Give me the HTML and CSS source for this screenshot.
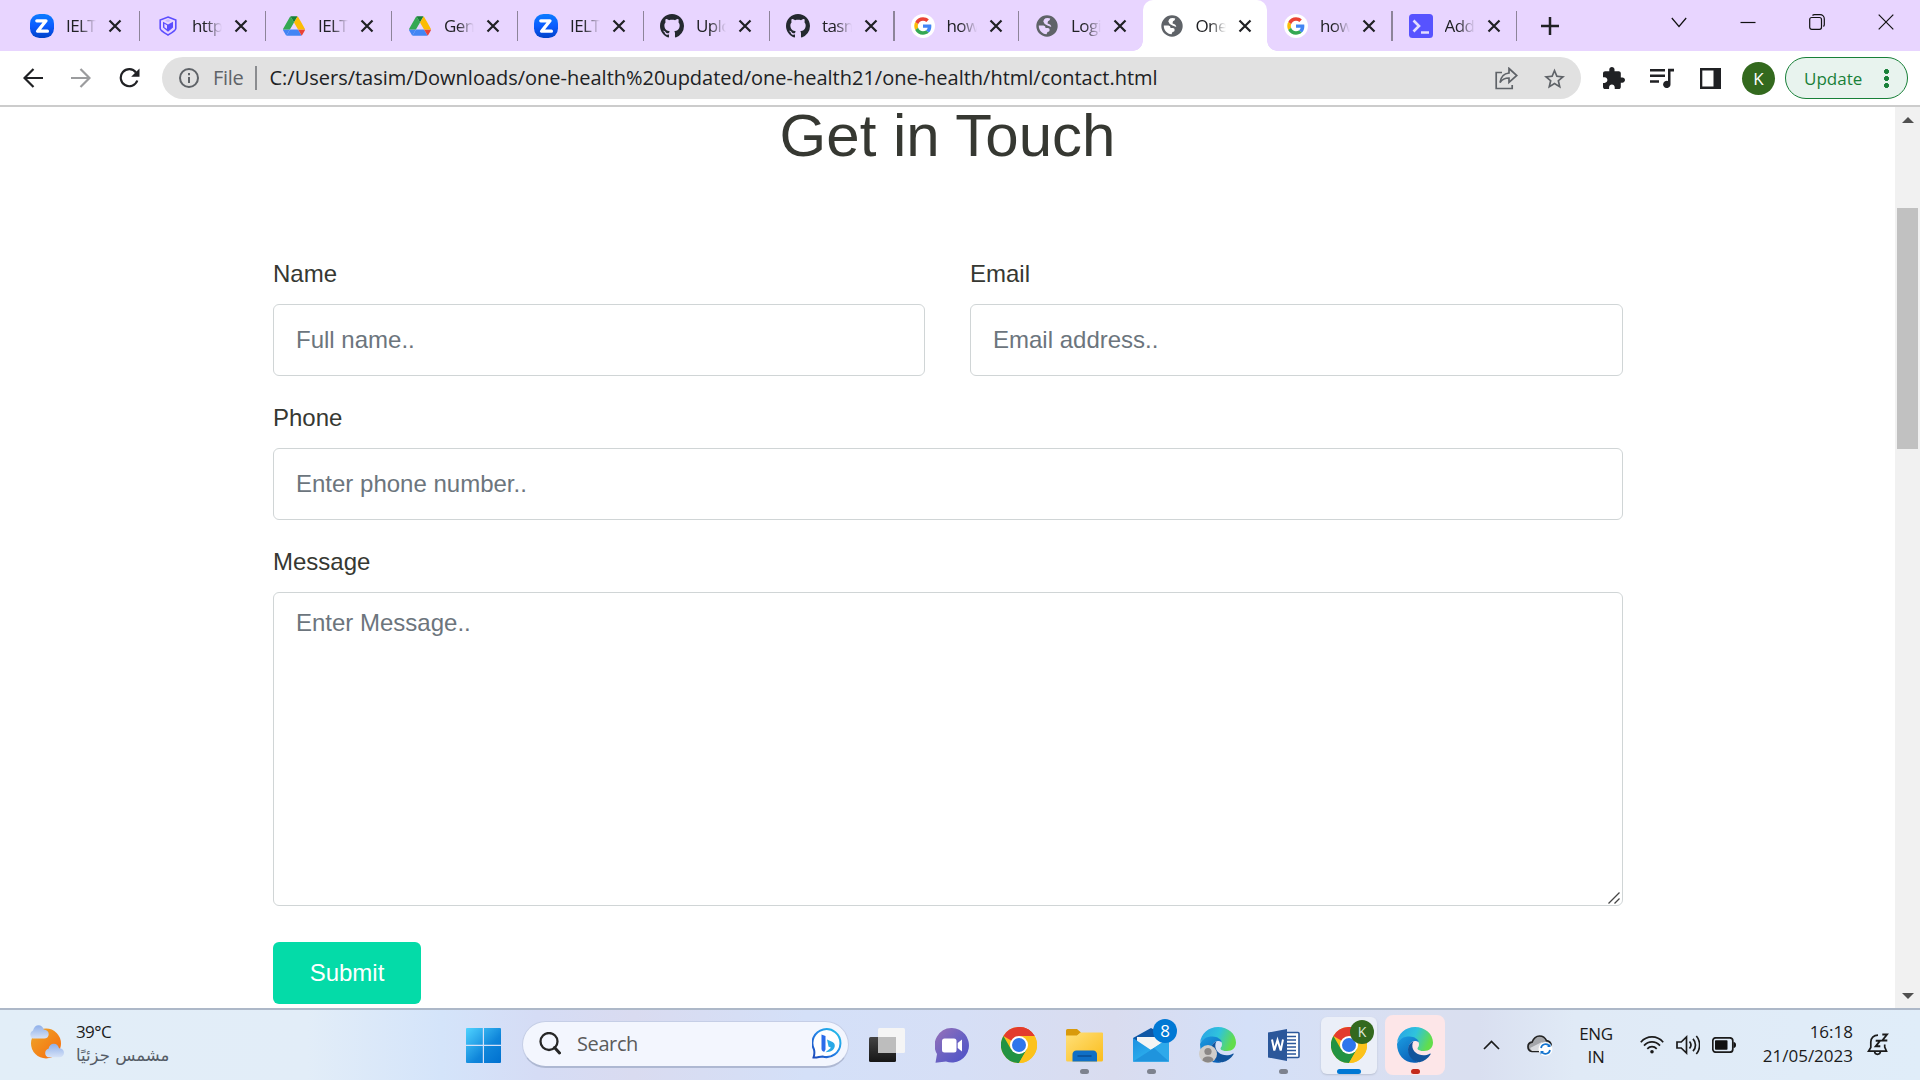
FILE: index.html
```html
<!DOCTYPE html>
<html lang="en">
<head>
<meta charset="utf-8">
<title>One Health</title>
<link rel="stylesheet" href="styles.css">
</head>
<body>
<svg class="defs" width="0" height="0" aria-hidden="true">
  <defs>
    <linearGradient id="zg" x1="0" y1="0" x2="0" y2="1"><stop offset="0" stop-color="#0b7cff"/><stop offset=".5" stop-color="#0b5cff"/><stop offset="1" stop-color="#0042c8"/></linearGradient>
    <linearGradient id="sun" x1="0" y1="0" x2="1" y2="1"><stop offset="0" stop-color="#eda82b"/><stop offset="1" stop-color="#f8690b"/></linearGradient>
    <linearGradient id="cloud" x1="0" y1="0" x2="0" y2="1"><stop offset="0" stop-color="#8fb0ea"/><stop offset="1" stop-color="#d6e2f7"/></linearGradient>
    <linearGradient id="win" x1="0" y1="0" x2="1" y2="1"><stop offset="0" stop-color="#4fd3ff"/><stop offset=".6" stop-color="#0f85da"/><stop offset="1" stop-color="#0070cf"/></linearGradient>
    <linearGradient id="bing" x1="0" y1="1" x2="1" y2="0"><stop offset="0" stop-color="#1b46b8"/><stop offset=".5" stop-color="#2383e8"/><stop offset="1" stop-color="#25c8e8"/></linearGradient>
    <linearGradient id="chat" x1="0" y1="0" x2="1" y2="1"><stop offset="0" stop-color="#9a72b8"/><stop offset=".5" stop-color="#6b62c2"/><stop offset="1" stop-color="#4c50c8"/></linearGradient>
    <linearGradient id="fold" x1="0" y1="0" x2="1" y2="1"><stop offset="0" stop-color="#ffe07a"/><stop offset="1" stop-color="#fbbd1c"/></linearGradient>
    <linearGradient id="mail" x1="0" y1="0" x2="1" y2="1"><stop offset="0" stop-color="#1d8fe0"/><stop offset="1" stop-color="#35c3f5"/></linearGradient>
    <linearGradient id="e1" x1="0" y1="0" x2="1" y2=".3"><stop offset="0" stop-color="#2a9fe6"/><stop offset=".55" stop-color="#2fc3dd"/><stop offset="1" stop-color="#62dd4c"/></linearGradient>
    <linearGradient id="e2" x1="0" y1="0" x2=".6" y2="1"><stop offset="0" stop-color="#1b9de2"/><stop offset="1" stop-color="#0c62b8"/></linearGradient>
    <linearGradient id="blk" x1="0" y1="0" x2="0" y2="1"><stop offset="0" stop-color="#444"/><stop offset="1" stop-color="#161616"/></linearGradient>

    <symbol id="i-zoom" viewBox="0 0 24 24"><rect width="24" height="24" rx="9.5" fill="url(#zg)"/><path d="M6.8 6.8h9.2L7.6 17.2h9.8" fill="none" stroke="#fff" stroke-width="3.3" stroke-linecap="round" stroke-linejoin="round"/></symbol>
    <symbol id="i-shield" viewBox="0 0 24 24"><path d="M12 3l7.800 3v8.400c0 2-4.500 4.600-7.800 6.600-3.300-2-7.800-4.600-7.800-6.600V6z" fill="none" stroke="#5b4dff" stroke-width="1.600"/><path d="M12 10.500l5-2.700v5.700l-5 4.300-5-4.300V7.800z" fill="#5b4dff"/><path d="M8.400 9.800l2.600 1.500v3.800l-2.600-1.800z" fill="#e8d5ff"/><path d="M12 5.200l3 1.500-3 1.600-3-1.600z" fill="#c9b8ff"/></symbol>
    <symbol id="i-drive" viewBox="0 0 87.300 78"><path d="M6.600 66.850l3.850 6.650c.8 1.400 1.950 2.500 3.300 3.300L27.500 53H0c0 1.550.4 3.100 1.200 4.500z" fill="#4285f4"/><path d="M43.650 25L29.900 1.200c-1.350.8-2.500 1.900-3.300 3.300L1.200 48.500C.4 49.900 0 51.450 0 53h27.500z" fill="#34a853"/><path d="M43.650 25L57.400 1.200C56.050.4 54.500 0 52.900 0H34.400c-1.600 0-3.150.45-4.500 1.200z" fill="#188038"/><path d="M59.800 53H27.500L13.750 76.800c1.350.8 2.900 1.200 4.500 1.200h50.800c1.600 0 3.150-.45 4.500-1.200z" fill="#4285f4"/><path d="M73.550 76.800c1.350-.8 2.500-1.900 3.300-3.300l9.250-16c.8-1.400 1.200-2.950 1.200-4.500H59.800z" fill="#ea4335"/><path d="M73.400 26.500L60.700 4.500c-.8-1.400-1.950-2.500-3.300-3.300L43.650 25 59.800 53h27.450c0-1.550-.4-3.100-1.200-4.500z" fill="#fbbc04"/></symbol>
    <symbol id="i-github" viewBox="0 0 16 16"><path fill="#24292f" d="M8 0C3.580 0 0 3.580 0 8c0 3.540 2.290 6.530 5.470 7.590.4.070.55-.17.55-.38 0-.19-.01-.82-.01-1.490-2.010.37-2.530-.49-2.690-.94-.09-.23-.48-.94-.82-1.130-.28-.15-.68-.52-.01-.53.63-.01 1.080.58 1.230.82.72 1.210 1.870.87 2.330.66.070-.52.28-.87.51-1.070-1.780-.2-3.640-.89-3.640-3.950 0-.87.31-1.590.82-2.150-.08-.2-.36-1.020.08-2.120 0 0 .67-.21 2.200.82.64-.18 1.320-.27 2-.27s1.360.09 2 .27c1.530-1.040 2.200-.82 2.200-.82.44 1.100.16 1.920.08 2.120.51.56.82 1.270.82 2.150 0 3.070-1.870 3.750-3.650 3.950.29.25.54.73.54 1.480 0 1.070-.01 1.930-.01 2.200 0 .21.15.46.55.38A8.010 8.010 0 0 0 16 8c0-4.420-3.580-8-8-8z"/></symbol>
    <symbol id="i-google" viewBox="-9 -9 66 66"><circle cx="24" cy="24" r="33" fill="#fff"/><path fill="#EA4335" d="M24 9.500c3.540 0 6.710 1.220 9.210 3.600l6.850-6.850C35.900 2.380 30.470 0 24 0 14.620 0 6.510 5.380 2.560 13.220l7.980 6.190C12.430 13.720 17.740 9.500 24 9.500z"/><path fill="#4285F4" d="M46.980 24.550c0-1.570-.15-3.090-.38-4.550H24v9.020h12.940c-.58 2.960-2.260 5.480-4.780 7.180l7.730 6c4.510-4.180 7.090-10.360 7.090-17.650z"/><path fill="#FBBC05" d="M10.530 28.590c-.48-1.450-.76-2.990-.76-4.590s.27-3.140.76-4.590l-7.980-6.190C.92 16.460 0 20.120 0 24c0 3.880.92 7.540 2.560 10.780z"/><path fill="#34A853" d="M24 48c6.480 0 11.930-2.130 15.890-5.810l-7.730-6c-2.150 1.450-4.920 2.300-8.160 2.300-6.260 0-11.570-4.220-13.470-9.910l-7.980 6.190C6.510 42.620 14.620 48 24 48z"/></symbol>
    <symbol id="i-globe" viewBox="0 0 24 24"><path fill="#5f6368" fill-rule="evenodd" d="M12 1.300A10.700 10.700 0 1 0 12 22.700 10.700 10.700 0 0 0 12 1.300zM10.500 4.300Q13 3.700 15.300 4.400 15 6.700 13 7.200L12.500 9.300Q12.800 10 14 10 16 10.300 16.300 13L12.500 11.600Q8.800 10 8.300 7.500 8.700 5 10.500 4.300zM3.800 11.500H8.500Q10.500 11.800 10.600 14H12.800Q14.700 14.200 14.700 16 14.600 17.800 12.500 18L11.500 20.300C7 20 3.600 16 3.800 11.500z"/></symbol>
    <symbol id="i-term" viewBox="0 0 24 24"><rect width="24" height="24" rx="3.500" fill="#5753ff"/><path d="M4.500 6.500L10 12l-5.500 5.500M12 18.500h8" fill="none" stroke="#e4deff" stroke-width="2.600"/></symbol>
    <symbol id="i-x" viewBox="0 0 14 14"><path d="M1.500 1.500l11 11M12.500 1.500l-11 11" stroke="#202124" stroke-width="2.200" fill="none"/></symbol>
    <symbol id="i-chrome" viewBox="0 0 36 36"><circle cx="18" cy="18" r="18" fill="#fcc21b"/><path d="M18 18L2.400 9A18 18 0 0 1 33.600 9z" fill="#e33b2e"/><path d="M18 0a18 18 0 0 1 15.600 9H18z" fill="#e33b2e"/><path d="M2.400 9A18 18 0 0 0 18 36l7.800-13.500L18 18 10.200 22.500z" fill="#229342"/><path d="M18 9h15.600A18 18 0 0 1 18 36l7.800-13.500z" fill="#fcc21b"/><circle cx="18" cy="18" r="9" fill="#fff"/><circle cx="18" cy="18" r="7" fill="#2f76ec"/></symbol>
    <symbol id="i-edge" viewBox="0 0 36 36"><path d="M0 16C1 6.500 8.500 0 18 0c10 0 18 7 18 15.500 0 5-3.700 8.500-9 8.500-4 0-6.500-1.300-6.500-2.600 0-.9 1.500-1.600 1.500-4.200 0-3.700-3.500-6.700-9-6.700C7 10.500 2 12 0 16z" fill="url(#e1)"/><path d="M0 17c1.500-5 6.500-7.500 12.500-7.500 5 0 9 3 9.500 6-1-1-2.500-1.500-4-1.500-4 0-6.500 4-6.500 8 0 6 4 11 10 13.200C9 38 0 29 0 17z" fill="url(#e2)"/><path d="M16.500 14.200C12.700 16 11 19 11 22.500c0 7 5.500 12.800 11.500 12.800 4.500-1 8.500-4 11-7.800.4-.7-.1-1.200-.8-.8-2 1-4 1.500-6.200 1.500-6 0-11.200-4-11.200-9.500 0-1.800.4-3.300 1.200-4.500z" fill="#11549c"/></symbol>
  </defs>
</svg>

<header class="tabstrip">
  <div class="tab"><svg class="fav"><use href="#i-zoom"/></svg><span class="title">IELTS</span><svg class="x"><use href="#i-x"/></svg></div>
  <div class="tab"><svg class="fav"><use href="#i-shield"/></svg><span class="title">https</span><svg class="x"><use href="#i-x"/></svg></div>
  <div class="tab"><svg class="fav drive"><use href="#i-drive"/></svg><span class="title">IELTS</span><svg class="x"><use href="#i-x"/></svg></div>
  <div class="tab"><svg class="fav drive"><use href="#i-drive"/></svg><span class="title">Gene</span><svg class="x"><use href="#i-x"/></svg></div>
  <div class="tab"><svg class="fav"><use href="#i-zoom"/></svg><span class="title">IELTS</span><svg class="x"><use href="#i-x"/></svg></div>
  <div class="tab"><svg class="fav"><use href="#i-github"/></svg><span class="title">Uploa</span><svg class="x"><use href="#i-x"/></svg></div>
  <div class="tab narrow"><svg class="fav"><use href="#i-github"/></svg><span class="title">tasm</span><svg class="x"><use href="#i-x"/></svg></div>
  <div class="tab narrow"><svg class="fav"><use href="#i-google"/></svg><span class="title">how t</span><svg class="x"><use href="#i-x"/></svg></div>
  <div class="tab narrow nosep"><svg class="fav"><use href="#i-globe"/></svg><span class="title">Logi</span><svg class="x"><use href="#i-x"/></svg></div>
  <div class="tab narrow active nosep"><svg class="fav"><use href="#i-globe"/></svg><span class="title">One H</span><svg class="x"><use href="#i-x"/></svg></div>
  <div class="tab narrow"><svg class="fav"><use href="#i-google"/></svg><span class="title">how t</span><svg class="x"><use href="#i-x"/></svg></div>
  <div class="tab narrow"><svg class="fav"><use href="#i-term"/></svg><span class="title">Add f</span><svg class="x"><use href="#i-x"/></svg></div>
  <svg class="plus" viewBox="0 0 18 18"><path d="M9 0v18M0 9h18" stroke="#202124" stroke-width="2.500"/></svg>
  <div class="winctl">
    <svg width="16" height="16" viewBox="0 0 16 16"><path d="M.8 4L8 12.500 15.200 4"/></svg>
    <svg width="16" height="16" viewBox="0 0 16 16"><path d="M.5 8.500h15"/></svg>
    <svg width="16" height="16" viewBox="0 0 16 16"><rect x=".7" y="3.500" width="11.800" height="11.800" rx="2"/><path d="M3.500 1.500C4 .9 4.500.7 5.500.7H11c2.600 0 4.300 1.700 4.300 4.300v5.500c0 1-.3 1.500-.9 2"/></svg>
    <svg width="16" height="16" viewBox="0 0 16 16"><path d="M.7.7l14.600 14.600M15.300.7L.7 15.300"/></svg>
  </div>
</header>

<nav class="toolbar">
  <svg class="nav-i back" viewBox="0 0 20 20"><path d="M20 10H2M10.500 1L1.500 10l9 9" stroke="#202124"/></svg>
  <svg class="nav-i fwd" viewBox="0 0 20 20"><path d="M0 10h18M9.500 1l9 9-9 9" stroke="#9b9c9e"/></svg>
  <svg class="nav-i reload" viewBox="0 0 20 20"><path d="M17.800 12.500A8.500 8.500 0 1 1 16.500 4.500" stroke="#202124"/><path d="M20 .5v8.300h-8.300z" fill="#202124" stroke="none"/></svg>
  <div class="omnibox">
    <svg class="info" viewBox="0 0 20 20"><circle cx="10" cy="10" r="9" fill="none" stroke="#5f6368" stroke-width="2"/><path d="M9 9h2v6H9zM9 5h2v2.200H9z" fill="#5f6368"/></svg>
    <span class="scheme">File</span>
    <span class="bar"></span>
    <span class="url">C:/Users/tasim/Downloads/one-health%20updated/one-health21/one-health/html/contact.html</span>
    <svg class="share" viewBox="0 0 23 23"><path d="M7 5.500H1.200v16h16V18" /><path d="M14 1.500l7.800 7-7.800 6.800V11c-4 0-6.800 1.200-9 4.500C5.800 10 8.800 6.500 14 6z"/></svg>
    <svg class="star" viewBox="2 2 20 19"><path fill="#5f6368" d="M22 9.240l-7.190-.62L12 2 9.190 8.630 2 9.240l5.460 4.730L5.820 21 12 17.270 18.180 21l-1.630-7.030L22 9.240zM12 15.400l-3.760 2.270 1-4.280-3.320-2.880 4.380-.38L12 6.100l1.710 4.040 4.380.38-3.320 2.880 1 4.280L12 15.400z"/></svg>
  </div>
  <svg class="puzzle" viewBox="2 1 21 21"><path fill="#202124" d="M20.500 11H19V7c0-1.100-.9-2-2-2h-4V3.500C13 2.120 11.880 1 10.500 1S8 2.120 8 3.500V5H4c-1.100 0-1.990.9-1.990 2v3.800H3.500c1.490 0 2.700 1.210 2.700 2.700s-1.210 2.700-2.700 2.700H2V20c0 1.100.9 2 2 2h3.800v-1.500c0-1.490 1.210-2.700 2.700-2.700 1.490 0 2.700 1.210 2.700 2.700V22H17c1.100 0 2-.9 2-2v-4h1.500c1.380 0 2.500-1.120 2.500-2.500S21.880 11 20.500 11z"/></svg>
  <svg class="queue" viewBox="0 0 24 20"><path d="M0 2.300h15M0 7.800h15M0 13.500h9" stroke="#202124" stroke-width="2.400"/><path d="M24 .8h-6v12.100a3.700 3.700 0 1 0 2.500 3.400V3.500H24z" fill="#202124"/></svg>
  <svg class="panel" viewBox="0 0 21 21"><path fill="#202124" fill-rule="evenodd" d="M0 0h21v21H0zM2.300 2.500v16H13.500v-16z"/></svg>
  <span class="avatar">K</span>
  <span class="update"><span>Update</span><i></i></span>
</nav>

<main class="viewport">
  <section class="page">
    <h1>Get in Touch</h1>
    <form class="form">
      <div class="field"><label for="n">Name</label><input id="n" type="text" placeholder="Full name.."></div>
      <div class="field"><label for="e">Email</label><input id="e" type="text" placeholder="Email address.."></div>
      <div class="field wide"><label for="p">Phone</label><input id="p" type="text" placeholder="Enter phone number.."></div>
      <div class="field wide"><label for="m">Message</label>
        <div class="area"><textarea id="m" placeholder="Enter Message.."></textarea><svg class="grip" viewBox="0 0 12 12"><path d="M.5 11.500l11-11M6.500 11.500l5-5" stroke="#444" stroke-width="1.300"/></svg></div>
      </div>
      <button class="submit" type="button">Submit</button>
    </form>
  </section>
  <aside class="scroll">
    <svg width="12" height="6" viewBox="0 0 12 6"><path d="M0 6l6-6 6 6z" fill="#505050"/></svg>
    <span class="thumb"></span>
    <svg class="down" width="12" height="6" viewBox="0 0 12 6"><path d="M0 0h12L6 6z" fill="#505050"/></svg>
  </aside>
</main>

<footer class="taskbar">
  <div class="weather">
    <svg width="36" height="34" viewBox="0 0 36 34"><circle cx="18" cy="18.500" r="15" fill="url(#sun)"/><path d="M4.500 13.500a4.500 4.500 0 0 1 .5-8C6 2 8 .3 10.500.3c2.700 0 4.500 1.700 5.200 4.200 3 .2 5 2 5 4.700s-2 4.300-4.500 4.300z" fill="url(#cloud)"/><path d="M20 32.300a4.500 4.500 0 0 1 .5-8.500c.8-3.200 2.700-5 5.300-5 2.800 0 4.600 1.800 5.200 4.500 3 0 5 1.900 5 4.500s-2 4.500-4.500 4.500z" fill="url(#cloud)"/></svg>
    <div class="wtext"><span>39°C</span><span class="ar" dir="rtl">مشمس جزئيًا</span></div>
  </div>

  <div class="apps">
    <svg class="start" viewBox="0 0 35 35"><path fill="url(#win)" d="M1 0h15.800v16.800H0V1a1 1 0 0 1 1-1zM18 0h16a1 1 0 0 1 1 1v15.800H18zM0 18h16.800v17H1a1 1 0 0 1-1-1zM18 18h17v16a1 1 0 0 1-1 1H18z"/></svg>
    <div class="search">
      <svg width="22" height="23" viewBox="0 0 22 23"><circle cx="10" cy="9.500" r="8.500" fill="none" stroke="#262626" stroke-width="2.300"/><path d="M15.500 15.500l5 5.500" stroke="#262626" stroke-width="3" stroke-linecap="round"/></svg>
      <span>Search</span>
      <svg width="31" height="32" viewBox="0 0 31 32"><path d="M1.500 29.500C2.500 27 2.800 25 2 21.500A14 14 0 1 1 10.500 28.500c-3 0-5.500 1.500-9 1z" fill="#fff" stroke="url(#bing)" stroke-width="2"/><path d="M9.500 6.500l4 1.500v13.500l-1.200 2.200c-1.800-.2-2.800-1.200-2.800-3z" fill="#2a6bea"/><path d="M15 11.500l5.500 2.500c1.500.8 2.300 2 2.300 3.800 0 3.700-3.800 6.500-9.300 6.500l5.500-4.500-2.500-1.200z" fill="#2aa9e6"/></svg>
    </div>
    <svg class="tview" viewBox="0 0 36 35"><rect y="9" width="27" height="25" rx="1.500" fill="url(#blk)"/><rect x="9" y="0" width="27" height="25" rx="1.500" fill="#f5f5f5"/><path d="M9 9h18v16H9z" fill="#bdbdbd"/></svg>
    <svg class="chat" viewBox="0 0 34 35"><path d="M17 0a17 17.300 0 1 1-6 33.500L.500 34.800 2 26A17 17.300 0 0 1 17 0z" fill="url(#chat)"/><rect x="7" y="10.500" width="14.500" height="14" rx="2.500" fill="#fff"/><path d="M22.700 15l4.300-3.500V23.500L22.700 20z" fill="#fff"/></svg>
    <svg class="chrome"><use href="#i-chrome"/></svg>
    <div class="app"><svg width="37" height="33" viewBox="0 0 37 33"><path d="M1.500 0h9.500l4 3.500L11 7H0V1.500A1.500 1.500 0 0 1 1.500 0z" fill="#d99a0b"/><path d="M0 6.500h11l3.500-3H36a1 1 0 0 1 1 1V31a1.500 1.500 0 0 1-1.500 1.500h-34A1.500 1.500 0 0 1 0 31z" fill="url(#fold)"/><path d="M6.500 32.500V26a4 4 0 0 1 4-4.500h16.500a4 4 0 0 1 4 4.500v6.500z" fill="#0f6fc6"/><path d="M11.500 27h14" stroke="#0a4c92" stroke-width="1.500"/></svg><i class="dot"></i></div>
    <div class="app"><svg width="36" height="34" viewBox="0 0 36 34"><path d="M0 10L18 0l18 10v5H0z" fill="#0f57a5"/><path d="M4 9h28v12H4z" fill="#f4f4f4"/><path d="M0 10l18 12 18-12v23.500H0z" fill="url(#mail)"/><path d="M0 33.500L36 10v23.500z" fill="#2ea9ea"/><path d="M0 33.500L21 20l15 13.500z" fill="#1f94dd"/></svg><span class="badge">8</span><i class="dot"></i></div>
    <div class="app"><svg width="36" height="36"><use href="#i-edge"/></svg><svg class="person" viewBox="0 0 18 18"><circle cx="9" cy="9" r="9" fill="#cfcdca"/><circle cx="9" cy="6.500" r="3.600" fill="#8b8886"/><path d="M3.500 15.500c0-5.500 11-5.500 11 0a9 9 0 0 1-11 0z" fill="#8b8886"/></svg></div>
    <div class="app"><svg width="32" height="32" viewBox="0 0 32 32"><rect x="17" y="3.500" width="14" height="25" rx="1" fill="#fff" stroke="#2b579a" stroke-width="1.600"/><path d="M19 7.500h9M19 11h9M19 14.500h9M19 18h9M19 21.500h9M19 25h9" stroke="#2b579a" stroke-width="1.500"/><path d="M0 3.500L19 0v32L0 28.500z" fill="#2b579a"/><path d="M4 10.500l2.300 11L9.500 11l3.200 10.500 2.300-11" fill="none" stroke="#fff" stroke-width="2"/></svg><i class="dot"></i></div>
    <div class="app tile"><svg width="36" height="36"><use href="#i-chrome"/></svg><span class="badge user">K</span><i class="dot on"></i></div>
    <div class="app tile alert"><svg width="36" height="36"><use href="#i-edge"/></svg><i class="dot red"></i></div>
  </div>

  <div class="tray">
    <svg class="up" viewBox="0 0 17 10"><path d="M1 9l7.500-7.500L16 9"/></svg>
    <svg class="od" viewBox="0 0 26 22"><path d="M5 17.500a4.700 4.700 0 0 1 0-9.300C6.500 4.500 9 2 12.500 2c3.500 0 5.700 1.800 7 4.700 3 .6 4.700 2.500 4.700 5.300s-2 5.500-5 5.500z" fill="#a4a6aa" stroke="#222" stroke-width="1.700"/><path d="M3 14l12-6 5 9H5z" fill="#d8dade"/><circle cx="18.500" cy="15" r="7" fill="#fff"/><path d="M14 14a4.700 4.700 0 0 1 8.500-1.800M23 16a4.700 4.700 0 0 1-8.500 1.800" fill="none" stroke="#1474cf" stroke-width="1.700"/><path d="M23.500 9.500V13H20zM13.500 20.500V17H17z" fill="#1474cf"/></svg>
    <div class="lang"><span>ENG</span><span>IN</span></div>
    <svg class="wifi" viewBox="0 0 24 18"><path d="M.8 6.200C7-.8 17-.8 23.200 6.200M4 9.600c4.500-4.900 11.500-4.900 16 0M7.300 12.800c2.700-2.900 6.700-2.900 9.400 0" /><circle cx="12" cy="15.700" r="1.800" fill="#1b1b1b" stroke="none"/></svg>
    <svg class="vol" viewBox="0 0 24 20"><path d="M1 7h4.200l5.300-5v16l-5.300-5H1zM13.500 6.500c1.700 2 1.700 5 0 7M17 3.800c3.300 3.500 3.300 8.900 0 12.400M20.300 1c4.400 5 4.400 13 0 18"/></svg>
    <svg class="batt" viewBox="0 0 24 16"><rect x=".8" y=".8" width="20" height="14.400" rx="3"/><rect x="3" y="3.200" width="12.500" height="9.600" rx=".8" fill="#111" stroke="none"/><path d="M21.500 5c1.800.3 2.500 1.200 2.500 3s-.7 2.700-2.500 3z" fill="#111" stroke="none"/></svg>
    <div class="clock"><span>16:18</span><span>21/05/2023</span></div>
    <svg class="bell" viewBox="0 0 22 23"><path d="M11 2.200C6.500 2.200 3.800 5.200 3.800 9v5.500L1.500 18.200h18L17.700 14v-2.500M7.500 18.500c.5 3.800 5.500 3.800 6 0"/><path d="M8.700 7.800h4.300l-4.300 5.500h4.600M15.300 1.500h4.700l-4.700 6h5" stroke-width="1.900"/></svg>
  </div>
</footer>
</body>
</html>
```

FILE: styles.css
```css
* { box-sizing: border-box; }
html, body { height: 100%; }
body {
  margin: 0;
  width: 1920px;
  height: 1080px;
  overflow: hidden;
  display: flex;
  flex-direction: column;
  background: #fff;
  font-family: "Open Sans", "Noto Sans", sans-serif;
  color: #1b1b1b;
}
svg { display: block; flex: none; }
.defs { position: absolute; }

/* Tab strip */
.tabstrip {
  flex: none;
  height: 51px;
  background: #e8d5ff;
  display: flex;
  align-items: center;
  padding-left: 13px;
}
.tab {
  position: relative;
  flex: none;
  width: 126px;
  height: 51px;
  padding-left: 17px;
  display: flex;
  align-items: center;
}
.tab.narrow { width: 124.5px; }
.tab::after {
  content: "";
  position: absolute;
  right: -1px;
  top: 11px;
  width: 1.500px;
  height: 30px;
  background: #8d8499;
}
.tab.nosep::after { display: none; }
.fav { width: 24px; height: 24px; }
.drive { padding: 2px 1px; }
.title {
  width: 30px;
  margin-left: 12px;
  overflow: hidden;
  white-space: nowrap;
  font-size: 17px;
  line-height: 24px;
  letter-spacing: -.6px;
  color: #202124;
  -webkit-mask-image: linear-gradient(90deg, #000 45%, transparent);
  mask-image: linear-gradient(90deg, #000 45%, transparent);
}
.x { width: 14px; height: 14px; margin-left: 12px; }
.tab.active { background: #fff; border-radius: 10px 10px 0 0; }
.tab.active::before,
.tab.active.nosep::after {
  content: "";
  display: block;
  position: absolute;
  top: auto;
  bottom: 0;
  width: 10px;
  height: 10px;
}
.tab.active::before { left: -10px; background: radial-gradient(circle at 0 0, transparent 9.500px, #fff 10px); }
.tab.active.nosep::after { right: -10px; background: radial-gradient(circle at 100% 0, transparent 9.500px, #fff 10px); }
.plus { width: 18px; height: 18px; margin-left: 25px; }
.winctl {
  display: flex;
  gap: 53px;
  margin: 0 0 8px 112px;
}
.winctl path, .winctl rect { fill: none; stroke: #111; stroke-width: 1.200; }

/* Toolbar */
.toolbar {
  flex: none;
  height: 56px;
  padding: 0 12px 0 23px;
  border-bottom: 2px solid #ccc;
  display: flex;
  align-items: center;
}
.nav-i { width: 20px; height: 20px; fill: none; stroke-width: 2.200; }
.fwd { margin-left: 28px; }
.reload { width: 21px; margin-left: 28px; }
.omnibox {
  width: 1419px;
  height: 42px;
  margin-left: 22px;
  padding: 0 16px 0 17px;
  border-radius: 21px;
  background: #e1e1e1;
  display: flex;
  align-items: center;
}
.info { width: 20px; height: 20px; }
.scheme, .url { font-size: 20px; line-height: 28px; white-space: nowrap; }
.scheme { width: 42px; margin-left: 14px; color: #5f6368; letter-spacing: -.3px; }
.bar { width: 1.500px; height: 24px; background: #8a8c8f; }
.url { margin-left: 13px; color: #202124; letter-spacing: -.01px; }
.share { width: 23px; height: 23px; margin-left: auto; fill: none; stroke: #5f6368; stroke-width: 1.700; }
.star { width: 21px; height: 21px; margin-left: 26px; }
.puzzle { width: 22px; height: 22px; margin-left: 22px; }
.queue { width: 24px; height: 20px; margin-left: 25px; }
.panel { width: 21px; height: 21px; margin-left: 26px; }
.avatar {
  width: 33px;
  height: 33px;
  margin-left: 21px;
  border-radius: 50%;
  background: #33691e;
  color: #fff;
  font-size: 17px;
  line-height: 33px;
  text-align: center;
}
.update {
  width: 123px;
  height: 42px;
  margin-left: auto;
  padding: 0 18px 0 18px;
  border: 1.500px solid #188038;
  border-radius: 21px;
  background: #e8f3ee;
  color: #188038;
  font-size: 17px;
  display: flex;
  align-items: center;
  justify-content: space-between;
}
.update i {
  width: 5px;
  height: 21px;
  background: radial-gradient(circle, #188038 2.200px, transparent 2.700px) 0 0 / 5px 7px;
}

/* Page */
.viewport { flex: none; height: 901px; display: flex; overflow: hidden; }
.page {
  width: 1895px;
  font-family: "Liberation Sans", Arial, sans-serif;
  color: #363832;
}
h1 {
  margin: -7px 0 0;
  font-size: 60px;
  line-height: 72px;
  font-weight: 400;
  text-align: center;
}
.form {
  width: 1350px;
  margin: 84px 0 0 273px;
  display: grid;
  grid-template-columns: 652px 653px;
  column-gap: 45px;
  row-gap: 24px;
  font-size: 24px;
}
.wide { grid-column: 1 / -1; }
label { display: block; height: 48px; line-height: 36px; }
input, textarea {
  display: block;
  width: 100%;
  height: 72px;
  padding: 0 22px;
  border: 1px solid #d0d5d6;
  border-radius: 6px;
  background: #fff;
  font: inherit;
  outline: none;
}
textarea { height: 314px; padding-top: 12px; line-height: 36px; resize: none; }
::placeholder { color: #6c757d; opacity: 1; }
.area { position: relative; }
.grip { position: absolute; right: 3px; bottom: 2px; width: 12px; height: 12px; }
.submit {
  width: 148px;
  height: 62px;
  margin-top: 12px;
  padding: 0;
  border: 0;
  border-radius: 6px;
  background: #04dba8;
  color: #fff;
  font: inherit;
}
.scroll {
  width: 25px;
  background: #f1f1f1;
  padding: 10px 0 9px;
  display: flex;
  flex-direction: column;
  align-items: center;
}
.thumb { width: 21px; height: 241px; margin-top: 85px; background: #c1c1c1; }
.down { margin-top: auto; }

/* Taskbar */
.taskbar {
  flex: none;
  height: 72px;
  border-top: 2px solid #adb8c8;
  background: linear-gradient(90deg, #e2eef8 0, #e2edf8 16%, #d4e4fa 23%, #d5dcf5 28%, #d9dbf0 33%, #d4e0f8 42%, #d6dff6 50%, #d9dcef 58%, #d4e0f8 65%, #dadff0 74%, #d9dff0 77%, #e0eaf6 82%, #e0edf9 100%);
  display: flex;
  align-items: center;
  font-size: 17px;
}
.weather { width: 437px; padding-left: 28px; display: flex; align-items: center; gap: 12px; }
.weather svg { margin-top: -6px; }
.wtext { display: flex; flex-direction: column; line-height: 24px; margin-top: -3px; letter-spacing: -.6px; }
.ar { color: #555c66; letter-spacing: 0; font-family: "DejaVu Sans", sans-serif; font-size: 16.500px; }
.apps { width: 1008px; height: 70px; padding-left: 29px; display: flex; align-items: center; }
.start { width: 35px; height: 35px; }
.search {
  width: 327px;
  height: 47px;
  margin: -2px 0 0 21px;
  padding: 0 5px 0 16px;
  border: 1px solid #c5cee6;
  border-bottom: 2px solid #aeb8d2;
  border-radius: 24px;
  background: #f3f6fe;
  display: flex;
  align-items: center;
  font-size: 20px;
  color: #5b5b5b;
}
.search span { margin: 0 auto 0 16px; letter-spacing: -.4px; }
.tview { width: 36px; height: 35px; margin-left: 20px; }
.chat { width: 34px; height: 35px; margin-left: 30px; }
.chrome { width: 36px; height: 36px; margin: 0 15px 0 32px; }
.app {
  position: relative;
  flex: none;
  width: 66.300px;
  height: 60px;
  display: flex;
  align-items: center;
  justify-content: center;
}
.tile { width: 56px; height: 57px; margin: 0 8px 0 4px; background: #ebeff8; border-radius: 6px; box-shadow: 0 1px 2px #b9c0d2; }
.alert { width: 60px; height: 60px; margin: 0; background: #fde6e8; border-radius: 8px; box-shadow: none; }
.dot { position: absolute; left: calc(50% - 4.500px); bottom: 1px; width: 9px; height: 5px; border-radius: 3px; background: #7d828e; }
.dot.on { left: calc(50% - 12px); bottom: 0; width: 24px; background: #0078d4; }
.dot.red { background: #c42b1c; }
.badge {
  position: absolute;
  left: 35px;
  top: 4px;
  width: 24px;
  height: 24px;
  border-radius: 50%;
  background: #0078d4;
  color: #fff;
  font-size: 17px;
  line-height: 23px;
  text-align: center;
}
.badge.user { left: 29px; top: 3px; background: #33691e; font-size: 14px; color: #dfe8d8; }
.person { position: absolute; left: 15px; bottom: 12px; width: 18px; height: 18px; }
.tray { flex: 1; height: 70px; display: flex; align-items: center; padding-left: 38px; }
.tray > svg { fill: none; stroke: #1b1b1b; stroke-width: 1.700; }
.tray > .od { stroke: none; width: 26px; height: 22px; margin-left: 27px; }
.up { width: 17px; height: 10px; }
.lang, .clock { display: flex; flex-direction: column; line-height: 23.500px; flex: none; }
.lang { width: 36px; margin-left: 25px; text-align: center; letter-spacing: -.3px; }
.wifi { width: 24px; height: 18px; margin-left: 26px; }
.vol { width: 24px; height: 20px; margin-left: 12px; }
.batt { width: 24px; height: 16px; margin-left: 12px; }
.clock { width: 96px; margin: -3px 0 0 21px; text-align: right; }
.bell { width: 22px; height: 23px; margin: -2px 0 0 14px; }
```
